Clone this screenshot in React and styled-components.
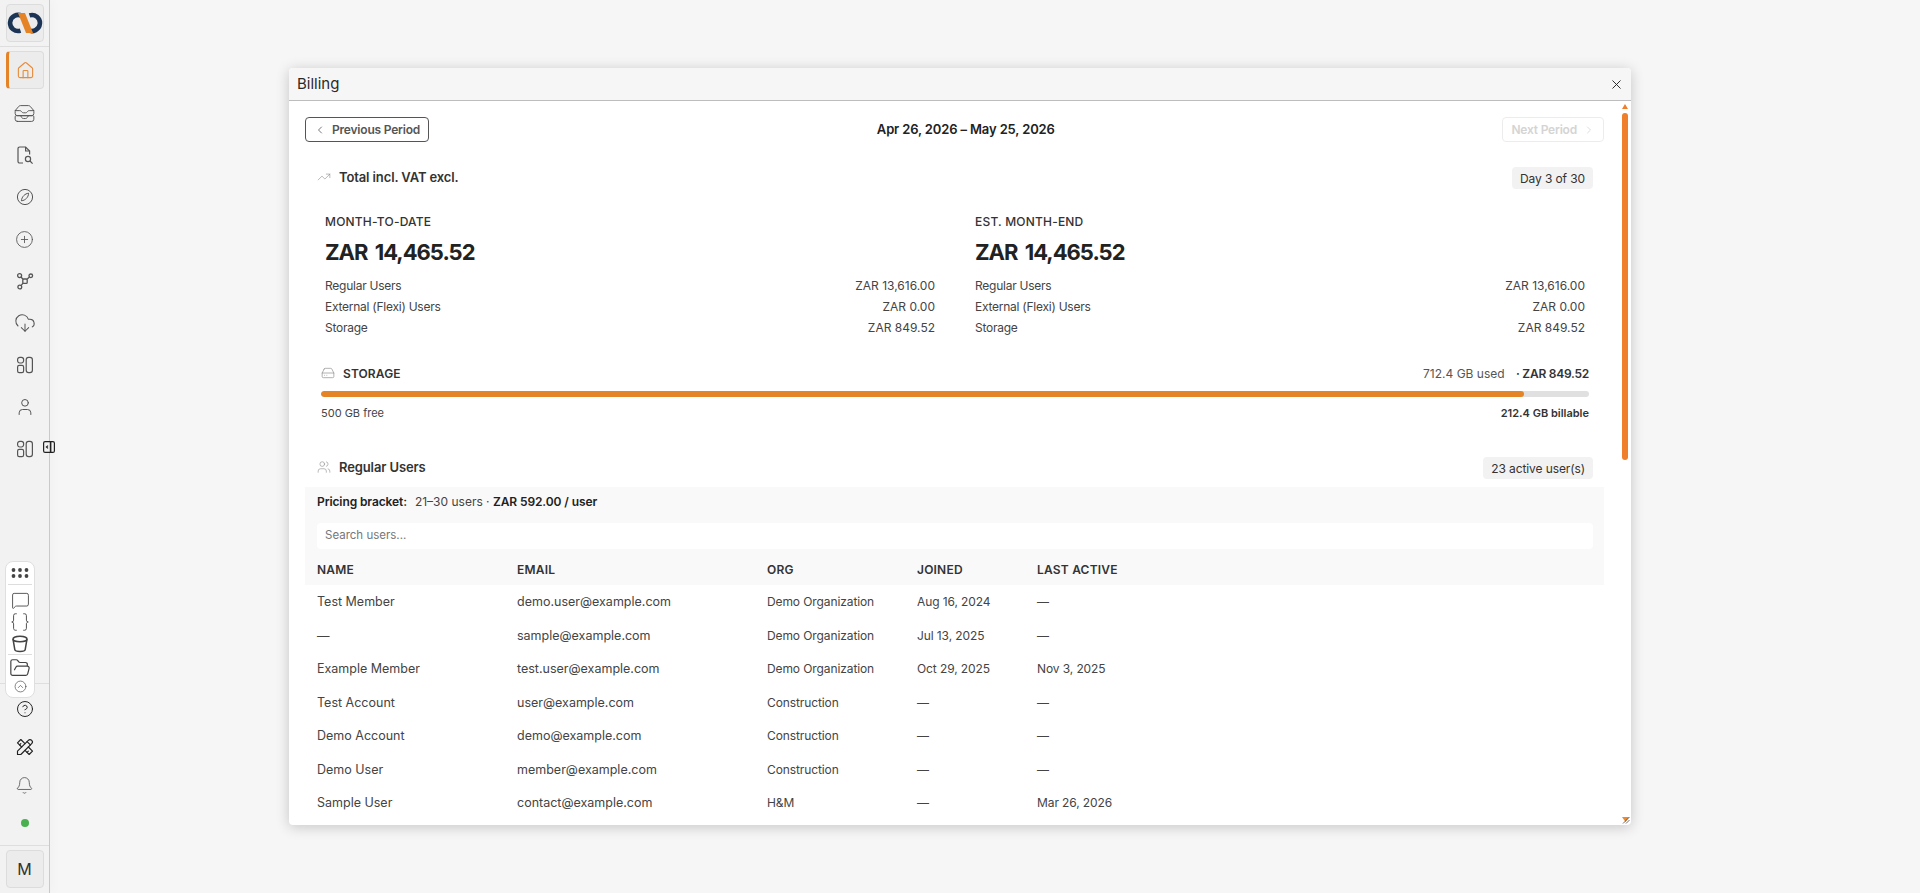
import styled, { createGlobalStyle } from 'styled-components';
import {
  House,
  CirclePlus,
  CloudDownload,
  User,
  MessageSquare,
  Braces,
  FolderOpen,
  CircleChevronUp,
  CircleHelp,
  Bell,
  ChevronLeft,
  ChevronRight,
  X,
  TrendingUp,
  HardDrive,
  Users,
} from 'lucide-react';
import { HiOutlineInboxStack } from 'react-icons/hi2';
import { TbTools } from 'react-icons/tb';

const GlobalStyle = createGlobalStyle`
  html, body {
    margin: 0;
    height: 100%;
    overflow: hidden;
    background: #f6f6f6;
    font-family: Inter, "Liberation Sans", sans-serif;
    color: #222;
  }
  #root {
    height: 100%;
  }
`;

const users = [
  ['Test Member', 'demo.user@example.com', 'Demo Organization', 'Aug 16, 2024', '—'],
  ['—', 'sample@example.com', 'Demo Organization', 'Jul 13, 2025', '—'],
  ['Example Member', 'test.user@example.com', 'Demo Organization', 'Oct 29, 2025', 'Nov 3, 2025'],
  ['Test Account', 'user@example.com', 'Construction', '—', '—'],
  ['Demo Account', 'demo@example.com', 'Construction', '—', '—'],
  ['Demo User', 'member@example.com', 'Construction', '—', '—'],
  ['Sample User', 'contact@example.com', 'H&M', '—', 'Mar 26, 2026'],
];

const charges = [
  ['Regular Users', 'ZAR 13,616.00'],
  ['External (Flexi) Users', 'ZAR 0.00'],
  ['Storage', 'ZAR 849.52'],
];

function Logo() {
  return (
    <svg width="36" height="22" viewBox="0 0 36 22" fill="none">
      <path d="M15 4 A8 8 0 1 0 13.5 18.6" stroke="#1c3557" strokeWidth="4.6" />
      <path d="M22.5 3.4 A8 8 0 1 1 21 18" stroke="#1c3557" strokeWidth="4.6" />
      <path d="M11 1 H18 L26 21 H19 Z" fill="#e58427" />
    </svg>
  );
}

function DocSearchIcon() {
  return (
    <svg width="18" height="19" viewBox="0 0 18 19" fill="none" stroke="currentColor" strokeWidth="1.2">
      <path d="M7 17 H3.6 A1.6 1.6 0 0 1 2 15.4 V2.6 A1.6 1.6 0 0 1 3.6 1 H9.6 L13.6 5 V8.6" />
      <path d="M9.6 1 V5 H13.6" />
      <circle cx="12" cy="13" r="2.6" />
      <path d="M14 15 L16.6 17.6" />
    </svg>
  );
}

function CompassLeaf() {
  return (
    <svg width="18" height="18" viewBox="0 0 18 18" fill="none" stroke="currentColor" strokeWidth="1">
      <circle cx="9" cy="9" r="7.6" />
      <path d="M12.6 5.2 C9 5.6 5.8 8.6 5.4 12.8 C9.4 12.4 12.4 9.4 12.6 5.2 Z" />
    </svg>
  );
}

function NodesIcon() {
  return (
    <svg width="18" height="18" viewBox="0 0 18 18" fill="none" stroke="currentColor" strokeWidth="1.3">
      <circle cx="3.6" cy="3.6" r="2" />
      <circle cx="14.8" cy="3.8" r="1.8" />
      <circle cx="3.8" cy="15" r="1.9" />
      <rect x="6.8" y="7" width="4.4" height="4.4" rx="1" />
      <path d="M5 5 L7 7.2 M13.4 5 L11 7.2 M5 13.6 L7 11.2" />
    </svg>
  );
}

function TilesIcon() {
  return (
    <svg width="18" height="18" viewBox="0 0 18 18" fill="none" stroke="currentColor" strokeWidth="1.2">
      <rect x="1.6" y="1.4" width="6" height="5.6" rx="2.2" />
      <rect x="1.6" y="9.4" width="6" height="7.2" rx="1.6" />
      <rect x="10.2" y="1.4" width="6.2" height="15.2" rx="2.4" />
    </svg>
  );
}

function BucketIcon() {
  return (
    <svg width="18" height="18" viewBox="0 0 18 18" fill="none" stroke="currentColor" strokeWidth="1.5">
      <ellipse cx="9" cy="4" rx="7" ry="2.8" />
      <path d="M2 4 L3.8 14.6 C4.2 17 13.8 17 14.2 14.6 L16 4" />
    </svg>
  );
}

function DotsIcon() {
  return (
    <svg width="18" height="12" viewBox="0 0 18 12" fill="#444">
      {[2.5, 9, 15.5].map((x) => (
        <g key={x}>
          <circle cx={x} cy="3" r="1.9" />
          <circle cx={x} cy="9" r="1.9" />
        </g>
      ))}
    </svg>
  );
}

function ToggleIcon() {
  return (
    <svg width="12" height="12" viewBox="0 0 12 12" fill="none" stroke="#222" strokeWidth="1.2">
      <rect x="0.6" y="0.6" width="10.8" height="10.8" rx="1.5" />
      <path d="M7.6 0.6 V11.4" strokeWidth="1.6" />
      <path d="M5 4.6 L3.4 6 L5 7.4" />
    </svg>
  );
}

function ResizeGrip() {
  return (
    <svg width="8" height="8" viewBox="0 0 8 8">
      <path d="M0 1 H7 L3.5 6 Z" fill="#ef8a2c" />
      <path d="M7.5 1 L1 7.5 M7.5 4 L4 7.5" stroke="#333" strokeWidth="0.7" />
    </svg>
  );
}

function App() {
  return (
    <Page>
      <GlobalStyle />
      <Sidebar>
        <TopGroup>
          <SideButton>
            <Logo />
          </SideButton>
          <Divider />
          <SideButton $active>
            <House size={19} strokeWidth={1.4} />
          </SideButton>
          <NavItem>
            <HiOutlineInboxStack size={23} strokeWidth={1} />
          </NavItem>
          <NavItem>
            <DocSearchIcon />
          </NavItem>
          <NavItem>
            <CompassLeaf />
          </NavItem>
          <NavItem>
            <CirclePlus size={19} strokeWidth={1.1} />
          </NavItem>
          <NavItem>
            <NodesIcon />
          </NavItem>
          <NavItem>
            <CloudDownload size={22} strokeWidth={1.1} />
          </NavItem>
          <NavItem>
            <TilesIcon />
          </NavItem>
          <NavItem>
            <User size={20} strokeWidth={1.2} />
          </NavItem>
          <NavItem>
            <TilesIcon />
          </NavItem>
        </TopGroup>

        <CollapseToggle>
          <ToggleIcon />
        </CollapseToggle>

        <ToolDock>
          <DockRow $height={22}>
            <DotsIcon />
          </DockRow>
          <DockLine $after={4} />
          <DockRow $height={22}>
            <MessageSquare size={19} strokeWidth={1.1} />
          </DockRow>
          <DockRow $height={22}>
            <Braces size={22} strokeWidth={1} />
          </DockRow>
          <DockRow $height={21}>
            <BucketIcon />
          </DockRow>
          <DockLine $after={0} />
          <DockRow $height={26}>
            <FolderOpen size={22} strokeWidth={1.3} />
          </DockRow>
          <DockRow $height={10}>
            <CircleChevronUp size={13} strokeWidth={1.2} />
          </DockRow>
        </ToolDock>

        <BottomGroup>
          <BottomItem>
            <CircleHelp size={18} strokeWidth={1.3} color="#222" />
          </BottomItem>
          <BottomItem>
            <TbTools size={20} strokeWidth={1.4} color="#222" />
          </BottomItem>
          <BottomItem>
            <Bell size={19} strokeWidth={1.1} />
          </BottomItem>
          <BottomItem>
            <StatusDot />
          </BottomItem>
          <FootDivider />
          <SideButton>
            <AvatarLetter>M</AvatarLetter>
          </SideButton>
        </BottomGroup>
      </Sidebar>

      <Desktop>
        <BillingWindow>
          <TitleBar>
            <WindowTitle>Billing</WindowTitle>
            <X size={15} strokeWidth={1.5} color="#222" />
          </TitleBar>
          <WindowBody>
            <Content>
              <PeriodNav>
                <PeriodButton>
                  <ChevronLeft size={12} strokeWidth={1.6} />
                  Previous Period
                </PeriodButton>
                <PeriodLabel>Apr 26, 2026 – May 25, 2026</PeriodLabel>
                <PeriodButton disabled>
                  Next Period
                  <ChevronRight size={12} strokeWidth={1.6} />
                </PeriodButton>
              </PeriodNav>

              <SectionHead $top={25}>
                <SectionTitle>
                  <TrendingUp size={14} strokeWidth={1} color="#888" />
                  Total incl. VAT excl.
                </SectionTitle>
                <Badge>Day 3 of 30</Badge>
              </SectionHead>

              <Summary>
                {['MONTH-TO-DATE', 'EST. MONTH-END'].map((label) => (
                  <SummaryColumn key={label}>
                    <SummaryLabel>{label}</SummaryLabel>
                    <Amount>ZAR 14,465.52</Amount>
                    <ChargeList>
                      {charges.map(([name, value]) => (
                        <ChargeRow key={name}>
                          <ChargeName>{name}</ChargeName>
                          <span>{value}</span>
                        </ChargeRow>
                      ))}
                    </ChargeList>
                  </SummaryColumn>
                ))}
              </Summary>

              <Storage>
                <StorageHead>
                  <StorageTitle>
                    <HardDrive size={14} strokeWidth={1.1} color="#888" />
                    STORAGE
                  </StorageTitle>
                  <StorageCost>
                    712.4 GB used <strong>· ZAR 849.52</strong>
                  </StorageCost>
                </StorageHead>
                <BarTrack>
                  <BarFill $percent={94.9} />
                </BarTrack>
                <StorageFoot>
                  <span>500 GB free</span>
                  <strong>212.4 GB billable</strong>
                </StorageFoot>
              </Storage>

              <SectionHead $top={36}>
                <SectionTitle>
                  <Users size={14} strokeWidth={1} color="#888" />
                  Regular Users
                </SectionTitle>
                <Badge>23 active user(s)</Badge>
              </SectionHead>

              <TablePanel>
                <PricingLine>
                  <strong>Pricing bracket:</strong>
                  <span>
                    21–30 users · <strong>ZAR 592.00 / user</strong>
                  </span>
                </PricingLine>
                <SearchInput placeholder="Search users..." />
                <HeadRow>
                  <span>NAME</span>
                  <span>EMAIL</span>
                  <span>ORG</span>
                  <span>JOINED</span>
                  <span>LAST ACTIVE</span>
                </HeadRow>
              </TablePanel>
              {users.map((user) => (
                <UserRow key={user[1]}>
                  <span>{user[0]}</span>
                  <span>{user[1]}</span>
                  <MetaCell>{user[2]}</MetaCell>
                  <MetaCell>{user[3]}</MetaCell>
                  <MetaCell>{user[4]}</MetaCell>
                </UserRow>
              ))}
            </Content>
            <Scrollbar>
              <ScrollArrow />
              <ScrollThumb />
            </Scrollbar>
          </WindowBody>
          <GripCorner>
            <ResizeGrip />
          </GripCorner>
        </BillingWindow>
      </Desktop>
    </Page>
  );
}

const Page = styled.div`
  display: flex;
  height: 100vh;
`;

const Sidebar = styled.aside`
  position: relative;
  flex: 0 0 50px;
  box-sizing: border-box;
  display: flex;
  flex-direction: column;
  align-items: stretch;
  background: #f2f2f2;
  border-right: 1px solid #c9c9c9;
  box-shadow: 4px 0 10px rgba(0, 0, 0, 0.02);
  color: #555;
`;

const TopGroup = styled.div`
  display: flex;
  flex-direction: column;
  align-items: center;
  padding-top: 4px;
`;

const SideButton = styled.div`
  box-sizing: border-box;
  width: 38px;
  height: 38px;
  flex: none;
  display: flex;
  align-items: center;
  justify-content: center;
  background: #ececec;
  border: 1px solid #dcdcdc;
  border-radius: 4px;
  border-left: ${(p) => (p.$active ? '3px solid #e58427' : '1px solid #dcdcdc')};
  color: ${(p) => (p.$active ? '#e58c3c' : '#555')};
`;

const Divider = styled.div`
  align-self: stretch;
  height: 1px;
  background: #dedede;
  margin: 4px 0;
`;

const NavItem = styled.div`
  height: 42px;
  width: 38px;
  flex: none;
  display: flex;
  align-items: center;
  justify-content: center;
  &:nth-child(4) {
    margin-top: 3px;
  }
`;

const CollapseToggle = styled.div`
  position: absolute;
  left: 43px;
  top: 441px;
  display: flex;
  background: #f2f2f2;
`;

const ToolDock = styled.div`
  position: absolute;
  z-index: 2;
  left: 5px;
  top: 561px;
  box-sizing: border-box;
  width: 30px;
  height: 137px;
  display: flex;
  flex-direction: column;
  align-items: center;
  background: #fff;
  border: 1px solid #dfdfdf;
  border-radius: 8px;
`;

const DockRow = styled.div`
  height: ${(p) => p.$height}px;
  flex: none;
  display: flex;
  align-items: center;
  justify-content: center;
  color: #444;
  svg {
    flex: none;
  }
`;

const DockLine = styled.div`
  align-self: stretch;
  height: 1px;
  flex: none;
  margin: 0 2px ${(p) => p.$after}px;
  background: #ddd;
`;

const BottomGroup = styled.div`
  margin-top: auto;
  display: flex;
  flex-direction: column;
  align-items: center;
  border-top: 1px solid #dedede;
  padding: 6px 0 5px;
`;

const BottomItem = styled.div`
  height: 38px;
  width: 38px;
  display: flex;
  align-items: center;
  justify-content: center;
`;

const StatusDot = styled.div`
  width: 8px;
  height: 8px;
  border-radius: 50%;
  background: #48b04f;
`;

const FootDivider = styled.div`
  align-self: stretch;
  height: 1px;
  background: #dedede;
  margin: 3px 0 4px;
`;

const AvatarLetter = styled.span`
  font-size: 16px;
  color: #333;
`;

const Desktop = styled.main`
  flex: 1;
  min-width: 0;
  padding: 68px 0 0 239px;
`;

const BillingWindow = styled.section`
  position: relative;
  width: 1342px;
  height: 757px;
  display: flex;
  flex-direction: column;
  overflow: hidden;
  background: #fff;
  border-radius: 4px;
  box-shadow: 0 2px 14px rgba(0, 0, 0, 0.2);
`;

const TitleBar = styled.header`
  flex: 0 0 33px;
  box-sizing: border-box;
  display: flex;
  align-items: center;
  justify-content: space-between;
  padding: 0 7px 0 8px;
  background: #f6f6f6;
  border-bottom: 1px solid #bdbdbd;
`;

const WindowTitle = styled.h1`
  margin: 0 0 2px;
  font-size: 15px;
  font-weight: 400;
  color: #2a2a2a;
`;

const WindowBody = styled.div`
  flex: 1;
  min-height: 0;
  display: flex;
`;

const Content = styled.div`
  flex: 1;
  min-width: 0;
  box-sizing: border-box;
  padding: 16px 17px 0 16px;
  overflow: hidden;
`;

const PeriodNav = styled.div`
  display: flex;
  align-items: center;
  justify-content: space-between;
`;

const PeriodButton = styled.button`
  box-sizing: border-box;
  height: 25px;
  display: flex;
  align-items: center;
  gap: 6px;
  padding: 0 8px;
  font: 600 12px Inter, sans-serif;
  letter-spacing: -0.2px;
  color: ${(p) => (p.disabled ? '#d4d4d4' : '#555')};
  background: #fff;
  border: 1px solid ${(p) => (p.disabled ? '#ececec' : '#555')};
  border-radius: 4px;
`;

const PeriodLabel = styled.div`
  margin-bottom: 1px;
  font-size: 13px;
  font-weight: 600;
  letter-spacing: -0.14px;
  color: #222;
`;

const SectionHead = styled.div`
  display: flex;
  align-items: center;
  justify-content: space-between;
  height: 22px;
  margin-top: ${(p) => p.$top}px;
  padding: 0 11px 0 12px;
`;

const SectionTitle = styled.div`
  display: flex;
  align-items: center;
  gap: 8px;
  padding-bottom: 3px;
  font-size: 13px;
  font-weight: 600;
  letter-spacing: -0.12px;
  color: #333;
`;

const Badge = styled.div`
  height: 22px;
  display: flex;
  align-items: center;
  padding: 0 8px;
  font-size: 12px;
  letter-spacing: -0.1px;
  color: #333;
  background: #f2f2f2;
  border-radius: 4px;
`;

const Summary = styled.div`
  display: grid;
  grid-template-columns: 610px 610px;
  gap: 40px;
  padding-left: 20px;
  margin-top: 25px;
`;

const SummaryColumn = styled.div`
  display: flex;
  flex-direction: column;
`;

const SummaryLabel = styled.div`
  font-size: 12px;
  line-height: 16px;
  font-weight: 500;
  letter-spacing: 0.2px;
  color: #333;
`;

const Amount = styled.div`
  margin-top: 8px;
  font-size: 22px;
  line-height: 28px;
  font-weight: 700;
  letter-spacing: -1px;
  word-spacing: 3px;
  color: #222;
`;

const ChargeList = styled.div`
  margin-top: 9px;
`;

const ChargeRow = styled.div`
  display: flex;
  justify-content: space-between;
  font-size: 12px;
  line-height: 21px;
  color: #444;
`;

const ChargeName = styled.span`
  letter-spacing: -0.25px;
`;

const Storage = styled.div`
  margin-top: 26px;
  padding: 0 15px 0 16px;
`;

const StorageHead = styled.div`
  display: flex;
  align-items: center;
  justify-content: space-between;
  height: 18px;
`;

const StorageTitle = styled.div`
  display: flex;
  align-items: center;
  gap: 8px;
  font-size: 12px;
  font-weight: 600;
  letter-spacing: 0.1px;
  color: #333;
`;

const StorageCost = styled.div`
  font-size: 12px;
  color: #555;
  strong {
    margin-left: 8px;
    font-weight: 600;
    letter-spacing: -0.25px;
    color: #333;
  }
`;

const BarTrack = styled.div`
  height: 6px;
  margin-top: 9px;
  border-radius: 3px;
  background: #e0e0e0;
  overflow: hidden;
`;

const BarFill = styled.div`
  height: 100%;
  width: ${(p) => p.$percent}%;
  border-radius: 3px;
  background: #e58427;
`;

const StorageFoot = styled.div`
  display: flex;
  justify-content: space-between;
  margin-top: 8px;
  font-size: 11px;
  line-height: 16px;
  color: #444;
  strong {
    font-weight: 600;
    color: #333;
  }
`;

const TablePanel = styled.div`
  margin-top: 8px;
  padding: 7px 11px 0 12px;
  height: 98px;
  box-sizing: border-box;
  background: #f9f9f9;
`;

const PricingLine = styled.div`
  display: flex;
  gap: 8px;
  font-size: 12px;
  line-height: 16px;
  color: #444;
  strong {
    font-weight: 600;
    letter-spacing: -0.1px;
    color: #222;
  }
`;

const SearchInput = styled.input`
  display: block;
  box-sizing: border-box;
  width: 100%;
  height: 26px;
  margin-top: 13px;
  padding: 0 8px 2px;
  font: 11.5px Inter, sans-serif;
  color: #222;
  background: #fff;
  border: none;
  border-radius: 4px;
  outline: none;
  &::placeholder {
    color: #777;
  }
`;

const columns = '200px 250px 150px 120px 1fr';

const HeadRow = styled.div`
  display: grid;
  grid-template-columns: ${columns};
  margin-top: 13px;
  font-size: 12px;
  line-height: 16px;
  font-weight: 600;
  letter-spacing: 0.2px;
  color: #333;
`;

const UserRow = styled.div`
  display: grid;
  grid-template-columns: ${columns};
  align-items: center;
  height: 33.5px;
  padding-left: 12px;
  font-size: 12.5px;
  color: #444;
`;

const MetaCell = styled.span`
  font-size: 12px;
  letter-spacing: -0.1px;
`;

const Scrollbar = styled.div`
  flex: 0 0 10px;
  box-sizing: border-box;
  display: flex;
  flex-direction: column;
  align-items: center;
  padding-top: 3px;
  padding-right: 2px;
`;

const ScrollArrow = styled.div`
  width: 0;
  height: 0;
  border-left: 3px solid transparent;
  border-right: 3px solid transparent;
  border-bottom: 5px solid #ef7f2a;
`;

const ScrollThumb = styled.div`
  width: 6px;
  height: 347px;
  margin-top: 4px;
  border-radius: 3px;
  background: #ef7f2a;
`;

const GripCorner = styled.div`
  position: absolute;
  right: 1px;
  bottom: 1px;
  display: flex;
`;

export default App;
